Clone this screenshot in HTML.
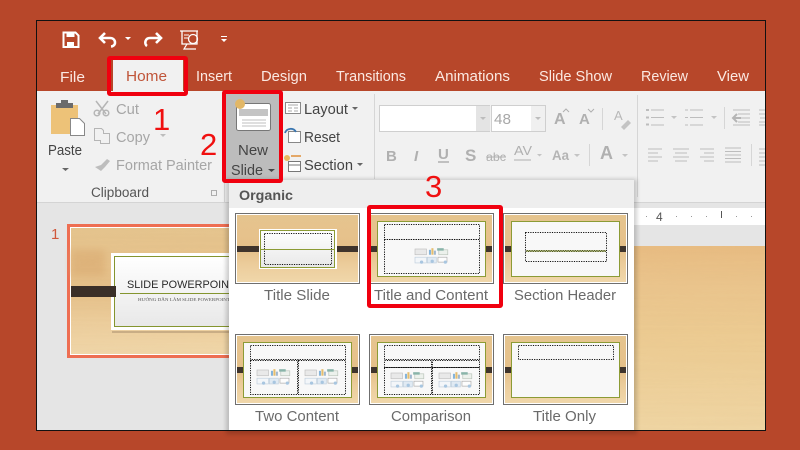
<!DOCTYPE html>
<html><head><meta charset="utf-8"><style>
html,body{margin:0;padding:0;background:#b7472a;width:800px;height:450px;overflow:hidden}
svg{display:block}
text{font-family:"Liberation Sans",sans-serif}
.d{fill:none;stroke:#111;stroke-width:1;stroke-dasharray:1.2 1.2}
.card{fill:#f8f8f8;stroke:#8c9b35;stroke-width:1}
</style></head><body>
<svg width="800" height="450" viewBox="0 0 800 450" xmlns="http://www.w3.org/2000/svg">
<defs>
<linearGradient id="w" x1="0" y1="0" x2="0" y2="1">
<stop offset="0" stop-color="#e5c48e"/><stop offset=".3" stop-color="#e6c28c"/><stop offset=".5" stop-color="#e4bf88"/><stop offset=".75" stop-color="#eccd9c"/><stop offset="1" stop-color="#f0d7aa"/></linearGradient>
<linearGradient id="c" x1="0" y1="0" x2="0" y2="1"><stop offset="0" stop-color="#fff"/><stop offset="1" stop-color="#e8e8e8"/></linearGradient>
<linearGradient id="m" x1="0" y1="0" x2="0" y2="1"><stop offset="0" stop-color="#e8bc82"/><stop offset=".2" stop-color="#eac48c"/><stop offset=".5" stop-color="#eccb92"/><stop offset="1" stop-color="#efd5a3"/></linearGradient>
<filter id="sh" x="-5%" y="-5%" width="110%" height="110%"><feGaussianBlur stdDeviation="2"/></filter>
<filter id="bl" x="-20%" y="-20%" width="140%" height="140%"><feGaussianBlur stdDeviation="4"/></filter>
<filter id="grain" x="0" y="0" width="100%" height="100%"><feTurbulence type="fractalNoise" baseFrequency="0.006 0.35" numOctaves="3" seed="4"/><feColorMatrix type="matrix" values="0 0 0 0 .62  0 0 0 0 .40  0 0 0 0 .16  0 0 0 .9 -.28"/></filter>
<g id="ci" fill="none" stroke-width=".8" opacity=".72" transform="scale(.82)">
<rect x="0" y="0" width="14" height="7" fill="#e4e4e4" stroke="#a9a9a9"/>
<rect x="17" y="1" width="2.500" height="6" fill="#5a9bd0" stroke="none"/><rect x="20" y="-1" width="2.500" height="8" fill="#e0a93a" stroke="none"/><rect x="23" y="2" width="2.500" height="5" fill="#7f9fc0" stroke="none"/>
<rect x="29" y="1" width="11" height="6" fill="#e8efe8" stroke="#a0b0a0"/><rect x="27" y="-1" width="8" height="3" fill="#5f9a8c" stroke="none"/>
<rect x="0" y="10" width="14" height="7" fill="#f2f6fa" stroke="#a8bed2"/><circle cx="8" cy="16" r="2" fill="#8ab3d8"/>
<rect x="15" y="10" width="11" height="7" fill="#d8e5f2" stroke="#a8bed2"/><circle cx="21" cy="15" r="2" fill="#8ab3d8"/>
<rect x="28" y="10" width="11" height="6" fill="#fff" stroke="#8a8a8a"/><circle cx="37" cy="16" r="2" fill="#8ab3d8"/>
</g>
<g id="th">
<rect x=".5" y=".5" width="124" height="70" fill="#fff" stroke="#6f6f6f"/>
<rect x="2" y="2" width="121" height="67" fill="url(#w)"/>
</g>
</defs>

<rect width="800" height="450" fill="#b7472a"/>
<rect x="36.500" y="20.500" width="729" height="410" fill="#b7472a" stroke="#111"/>

<!-- QAT -->
<g fill="none" stroke="#fff">
<path d="M63.500 32.500h12l3 3v11.500h-15z" stroke-width="2"/>
<rect x="66.500" y="33" width="8" height="4" fill="#fff" stroke="none"/>
<rect x="67" y="42" width="7" height="5" fill="#fff" stroke="none"/>
<path d="M105 33l-5 5 5 5" stroke-width="2.600"/><path d="M100 38h10c6 0 7 8 1 8.500" stroke-width="2.600"/>
<path d="M156 33l5 5-5 5" stroke-width="2.600"/><path d="M161 38h-11c-5 0-6 6-3 8" stroke-width="2.600"/>
<path d="M180 31h18M182 31v13h15V31" stroke-width="1.300"/>
<path d="M184 35h5M184 38h4" stroke-width="1.100"/>
<circle cx="193" cy="39" r="4.500" stroke-width="1.300"/>
<path d="M187 44l-3 5h12" stroke-width="1.200"/>
</g>
<path d="M125 37h6l-3 3zM221 39h6l-3 3z" fill="#fff"/>
<path d="M221 36.500h6" stroke="#fff" stroke-width="1"/>

<!-- Ribbon -->
<rect x="37" y="91" width="728" height="112" fill="#f1f1f1"/>
<rect x="37" y="202" width="728" height="1" fill="#d4d4d4"/>
<rect x="113" y="60" width="70" height="32" fill="#f1f1f1"/>

<!-- Tabs -->
<g fill="#fbe9e2" font-size="14.500">
<text x="60" y="82" textLength="25" lengthAdjust="spacingAndGlyphs">File</text>
<text x="126" y="81" textLength="41" lengthAdjust="spacingAndGlyphs" fill="#c0553a">Home</text>
<text x="196" y="81" textLength="36" lengthAdjust="spacingAndGlyphs">Insert</text>
<text x="261" y="81" textLength="46" lengthAdjust="spacingAndGlyphs">Design</text>
<text x="336" y="81" textLength="70" lengthAdjust="spacingAndGlyphs">Transitions</text>
<text x="435" y="81" textLength="75" lengthAdjust="spacingAndGlyphs">Animations</text>
<text x="539" y="81" textLength="73" lengthAdjust="spacingAndGlyphs">Slide Show</text>
<text x="641" y="81" textLength="47" lengthAdjust="spacingAndGlyphs">Review</text>
<text x="717" y="81" textLength="32" lengthAdjust="spacingAndGlyphs">View</text>
</g>

<!-- Clipboard -->
<rect x="51" y="105" width="27" height="29" fill="#edc278"/>
<rect x="56" y="103" width="17" height="5" fill="#6b6b6b"/><rect x="61" y="100" width="7" height="5" fill="#6b6b6b"/>
<path d="M70.500 118.500h9l5 5v12h-14z" fill="#fff" stroke="#888"/>
<text x="48" y="155" font-size="15" fill="#444" textLength="34" lengthAdjust="spacingAndGlyphs">Paste</text>
<path d="M62 168h7l-3.500 3z" fill="#666"/>
<g stroke="#b5b5b5" fill="none" stroke-width="1.500">
<path d="M96 101l10 13M108 101l-10 13"/><circle cx="97" cy="113" r="2.800"/><circle cx="106" cy="113" r="2.800"/>
<path d="M94.500 128.500h7l2 2v3h6v10h-9v-3h-6z" stroke-width="1"/>
</g>
<path d="M95 167l6-2 6-6 3 2-5 6-4 4z" fill="#bdbdbd"/>
<g font-size="15" fill="#a6a6a6">
<text x="116" y="114" textLength="23" lengthAdjust="spacingAndGlyphs">Cut</text>
<text x="116" y="142" textLength="34" lengthAdjust="spacingAndGlyphs">Copy</text>
<text x="116" y="170" textLength="96" lengthAdjust="spacingAndGlyphs">Format Painter</text>
</g>
<path d="M160 134h6l-3 3z" fill="#bdbdbd"/>
<text x="91" y="197" font-size="13.500" fill="#555" textLength="58" lengthAdjust="spacingAndGlyphs">Clipboard</text>
<path d="M211.500 190.500h5v5h-5z" fill="none" stroke="#999" stroke-width=".8"/>
<rect x="224" y="97" width="1" height="105" fill="#d6d6d6"/>

<!-- New slide -->
<rect x="226" y="93" width="53" height="87" fill="#bcbcbc"/>
<rect x="236.500" y="103.500" width="34" height="27" rx="2" fill="#fff" stroke="#777"/>
<rect x="239" y="109" width="29" height="7" fill="#c4c4c4"/>
<path d="M242 120h24M242 123h24M242 126h24" stroke="#aaa" stroke-width=".8"/>
<circle cx="240" cy="104" r="5" fill="#e2b766"/>
<text x="238" y="155" font-size="15" fill="#444" textLength="30" lengthAdjust="spacingAndGlyphs">New</text>
<text x="231" y="175" font-size="15" fill="#444" textLength="32" lengthAdjust="spacingAndGlyphs">Slide</text>
<path d="M268 169h7l-3.500 3z" fill="#444"/>

<!-- Layout group -->
<rect x="285.500" y="102.500" width="15" height="11" fill="#fff" stroke="#888"/><path d="M288 105h10M288 108h4M294 108h4M288 111h4M294 111h4" stroke="#aaa"/>
<rect x="288.500" y="131.500" width="12" height="11" fill="#fff" stroke="#888"/><path d="M285 133a6 6 0 0 1 11-1" fill="none" stroke="#3a76b0" stroke-width="1.800"/>
<path d="M291 156h10" stroke="#e0903a" stroke-width="1.500"/><circle cx="287" cy="158" r="3" fill="#e8b860"/><rect x="288.500" y="161.500" width="12" height="10" fill="#fff" stroke="#777"/><path d="M289 165h11" stroke="#777"/>
<g font-size="15" fill="#444">
<text x="304" y="114" textLength="44" lengthAdjust="spacingAndGlyphs">Layout</text>
<text x="304" y="142" textLength="36" lengthAdjust="spacingAndGlyphs">Reset</text>
<text x="304" y="170" textLength="49" lengthAdjust="spacingAndGlyphs">Section</text>
</g>
<path d="M352 107h6l-3 3zM357 163h6l-3 3z" fill="#666"/>
<rect x="374" y="94" width="1" height="85" fill="#d6d6d6"/>

<!-- Font -->
<rect x="379.500" y="105.500" width="110" height="26" fill="#fff" stroke="#cfcfcf"/>
<rect x="476" y="106" width="14" height="25" fill="#e4e4e4"/>
<path d="M480 117h6l-3 3z" fill="#bdbdbd"/>
<rect x="491.500" y="105.500" width="54" height="26" fill="#fff" stroke="#cfcfcf"/>
<rect x="531" y="106" width="14" height="25" fill="#f0f0f0"/>
<path d="M535 117h6l-3 3z" fill="#bdbdbd"/>
<text x="494" y="124" font-size="14.500" fill="#a8a8a8" textLength="17" lengthAdjust="spacingAndGlyphs">48</text>
<g font-size="15" fill="#b0b0b0" font-weight="bold">
<text x="386" y="161">B</text>
<text x="414" y="161" font-style="italic" font-family="Liberation Serif">I</text>
<text x="438" y="159">U</text>
<text x="465" y="161" font-size="17">S</text>
<text x="554" y="124" font-size="16">A</text>
<text x="579" y="124" font-size="15">A</text>
<text x="600" y="159" font-size="18">A</text>
</g>
<path d="M438 162h11" stroke="#b0b0b0" stroke-width="1.500"/>
<text x="486" y="161" font-size="12" fill="#b0b0b0" textLength="20" lengthAdjust="spacingAndGlyphs">abc</text>
<path d="M486 157h20" stroke="#b0b0b0"/>
<text x="514" y="155" font-size="13" fill="#b0b0b0" textLength="18" lengthAdjust="spacingAndGlyphs">AV</text>
<path d="M514 160h17" stroke="#b0b0b0"/>
<path d="M537 154h5l-2.500 2.500z" fill="#c4c4c4"/>
<text x="552" y="160" font-size="14" font-weight="bold" fill="#b4b4b4" textLength="17" lengthAdjust="spacingAndGlyphs">Aa</text>
<path d="M574 154h6l-3 3zM622 154h6l-3 3zM671 116h6l-3 3zM711 116h6l-3 3z" fill="#c4c4c4"/>
<path d="M563 112l3-3 3 3M588 109l3 3 3-3" fill="none" stroke="#b0b0b0"/>
<rect x="602" y="108" width="1" height="22" fill="#d6d6d6"/>
<rect x="589" y="144" width="1" height="22" fill="#d6d6d6"/>
<text x="614" y="120" font-size="13" fill="#b8b8b8">A</text>
<path d="M621 127l7-7 3 3-7 7z" fill="#c4c4c4"/>
<rect x="637" y="95" width="1" height="102" fill="#d6d6d6"/>

<!-- Paragraph -->
<g stroke="#bdbdbd" fill="none">
<path d="M651 110h13M651 117.500h13M651 125h13M690 110h13M690 117.500h13M690 125h13"/>
<path d="M646 110h3M646 117.500h3M646 124.500h3" stroke-width="2"/>
<path d="M685 110h3M685 117.500h3M685 125h3" stroke-width="1"/>
<path d="M733 110h17M738 114h12M738 118h12M738 122h12M733 125h17"/>
<path d="M733 118h8M737 114l-4 4 4 4" stroke-width="2" stroke="#b5b5b5"/>
<path d="M759 110h6M759 114h6M759 122h6M759 125h6M760 118h5"/>
<path d="M648 149h14M648 153h10M648 157h14M648 161h10"/>
<path d="M673 149h16M675 153h12M673 157h16M675 161h12"/>
<path d="M700 149h14M704 153h10M700 157h14M704 161h10"/>
<path d="M725 148h16M725 151.500h16M725 155h16M725 158.500h16M725 162h16"/>
<path d="M759 149h6M759 153h6M759 157h6M759 161h6M759 165h6"/>
</g>
<rect x="724" y="107" width="1" height="22" fill="#d6d6d6"/>
<rect x="751" y="144" width="1" height="22" fill="#d6d6d6"/>

<!-- Left pane and canvas -->
<rect x="37" y="203" width="728" height="227" fill="#e5e5e5"/>
<rect x="634" y="208" width="131" height="17" fill="#fff"/>
<text x="656" y="221" font-size="12" fill="#555">4</text>
<g fill="#999"><rect x="646" y="216" width="1" height="1"/><rect x="676" y="216" width="1" height="1"/><rect x="691" y="216" width="1" height="1"/><rect x="706" y="216" width="1" height="1"/><rect x="721" y="211" width="1" height="7" fill="#555"/><rect x="736" y="216" width="1" height="1"/><rect x="751" y="216" width="1" height="1"/></g>
<rect x="634" y="246" width="131" height="184" fill="url(#m)"/>
<rect x="634" y="246" width="131" height="184" filter="url(#grain)" opacity=".12"/>

<!-- Slide thumbnail -->
<text x="51" y="239" font-size="15" fill="#d0583c">1</text>
<rect x="67" y="224" width="165" height="134" fill="#ee6e52"/>
<rect x="70" y="227" width="162" height="128" fill="#fff"/>
<rect x="71" y="228" width="161" height="126" fill="url(#w)"/>
<rect x="71" y="250" width="34" height="26" fill="#d9a86e" opacity=".55" filter="url(#bl)"/>
<rect x="71" y="228" width="161" height="126" filter="url(#grain)" opacity=".15"/>
<rect x="111" y="253" width="120" height="77" fill="#fff"/>
<rect x="112" y="331" width="120" height="2" fill="#c9ad85"/>
<rect x="114.500" y="256.500" width="116" height="70" fill="url(#c)" stroke="#84952f" stroke-width="1"/>
<rect x="71" y="286" width="45" height="11" fill="#3a2f28"/>
<text x="127" y="288" font-size="11" fill="#2a2a2a" textLength="102" lengthAdjust="spacingAndGlyphs">SLIDE POWERPOIN</text>
<rect x="120" y="293" width="111" height="1" fill="#84952f"/>
<text x="138" y="301" font-size="4.500" style="font-family:'Liberation Serif',serif" fill="#555" textLength="92" lengthAdjust="spacingAndGlyphs">HƯỚNG DẪN LÀM SLIDE POWERPOINT</text>

<!-- Popup -->
<rect x="226" y="179" width="411" height="255" fill="#000" opacity=".18" filter="url(#sh)"/>
<rect x="229" y="180" width="405" height="250" fill="#fff"/>
<rect x="229" y="180" width="405" height="28" fill="#eeeeee"/>
<text x="239" y="200" font-size="13.500" font-weight="bold" fill="#555" textLength="54" lengthAdjust="spacingAndGlyphs">Organic</text>

<!-- Title Slide -->
<g transform="translate(235,213)">
<use href="#th"/>
<rect x="2" y="33" width="121" height="6" fill="#3f342c"/>
<rect x="24" y="16" width="78" height="40" fill="#fff"/>
<rect x="25.500" y="17.500" width="74" height="37" fill="url(#c)" stroke="#8c9b35"/>
<rect x="29.500" y="20.500" width="67" height="31" class="d"/>
<path d="M26 36.500h73" stroke="#8c9b35"/>
</g>
<text x="264" y="300" font-size="15" fill="#6a6a6a" textLength="66" lengthAdjust="spacingAndGlyphs">Title Slide</text>

<!-- Title and Content -->
<g transform="translate(369,213)">
<use href="#th"/>
<rect x="2" y="33" width="121" height="6" fill="#3f342c"/>
<rect x="8.500" y="8.500" width="108" height="55" class="card"/>
<rect x="15.500" y="11.500" width="95" height="15" class="d"/>
<rect x="15.500" y="26.500" width="95" height="34" class="d"/>
<use href="#ci" transform="translate(46,36)"/>
</g>
<text x="374" y="300" font-size="15" fill="#6a6a6a" textLength="114" lengthAdjust="spacingAndGlyphs">Title and Content</text>

<!-- Section Header -->
<g transform="translate(503,213)">
<use href="#th"/>
<rect x="2" y="33" width="121" height="6" fill="#3f342c"/>
<rect x="8.500" y="8.500" width="108" height="55" class="card"/>
<rect x="22.500" y="19.500" width="81" height="18" class="d"/>
<rect x="22.500" y="38.500" width="81" height="10" class="d"/>
<path d="M23 38h80" stroke="#8c9b35"/>
</g>
<text x="514" y="300" font-size="15" fill="#6a6a6a" textLength="102" lengthAdjust="spacingAndGlyphs">Section Header</text>

<!-- Two Content -->
<g transform="translate(235,334)">
<use href="#th"/>
<rect x="2" y="33" width="121" height="6" fill="#3f342c"/>
<rect x="8.500" y="8.500" width="108" height="55" class="card"/>
<rect x="15.500" y="11.500" width="95" height="14" class="d"/>
<rect x="15.500" y="26.500" width="47" height="34" class="d"/>
<rect x="63.500" y="26.500" width="47" height="34" class="d"/>
<use href="#ci" transform="translate(22,36)"/>
<use href="#ci" transform="translate(70,36)"/>
</g>
<text x="255" y="421" font-size="15" fill="#6a6a6a" textLength="84" lengthAdjust="spacingAndGlyphs">Two Content</text>

<!-- Comparison -->
<g transform="translate(369,334)">
<use href="#th"/>
<rect x="2" y="33" width="121" height="6" fill="#3f342c"/>
<rect x="8.500" y="8.500" width="108" height="55" class="card"/>
<rect x="15.500" y="11.500" width="95" height="14" class="d"/>
<rect x="15.500" y="26.500" width="47" height="7" class="d"/>
<rect x="63.500" y="26.500" width="47" height="7" class="d"/>
<rect x="15.500" y="33.500" width="47" height="27" class="d"/>
<rect x="63.500" y="33.500" width="47" height="27" class="d"/>
<use href="#ci" transform="translate(22,39)"/>
<use href="#ci" transform="translate(70,39)"/>
</g>
<text x="391" y="421" font-size="15" fill="#6a6a6a" textLength="80" lengthAdjust="spacingAndGlyphs">Comparison</text>

<!-- Title Only -->
<g transform="translate(503,334)">
<use href="#th"/>
<rect x="2" y="33" width="121" height="6" fill="#3f342c"/>
<rect x="8.500" y="8.500" width="108" height="55" class="card"/>
<rect x="15.500" y="11.500" width="95" height="14" class="d"/>
</g>
<text x="533" y="421" font-size="15" fill="#6a6a6a" textLength="63" lengthAdjust="spacingAndGlyphs">Title Only</text>

<!-- Red annotations -->
<g fill="none" stroke="#f0000f" stroke-width="4">
<rect x="109" y="58" width="77" height="36" rx="1"/>
<rect x="224" y="92" width="57" height="89" rx="1"/>
<rect x="369" y="207" width="132" height="99" rx="1"/>
</g>
<g fill="#f01010" font-size="31">
<text x="153" y="130">1</text>
<text x="200" y="155">2</text>
<text x="425" y="197">3</text>
</g>
</svg>
</body></html>
